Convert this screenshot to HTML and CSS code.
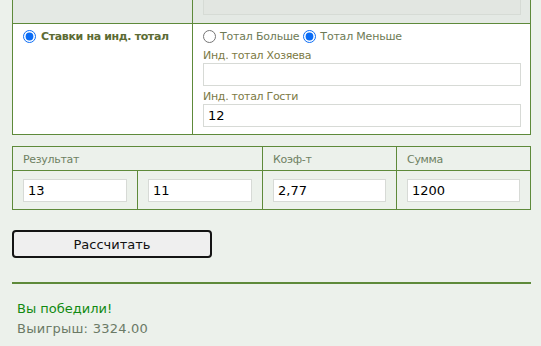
FILE: index.html
```html
<!DOCTYPE html>
<html>
<head>
<meta charset="utf-8">
<link rel="stylesheet" href="styles.css">
</head>
<body>
<div class="page">
  <div class="bets">
    <div class="cell top-left"></div>
    <div class="cell top-right"><div class="disabled-box"></div></div>
    <div class="cell main-left">
      <label class="bet-type"><input type="radio" name="type" checked> Ставки на инд. тотал</label>
    </div>
    <div class="cell main-right">
      <div class="radios">
        <label><input type="radio" name="ou"> Тотал Больше</label>
        <label><input type="radio" name="ou" checked> Тотал Меньше</label>
      </div>
      <div class="field-label">Инд. тотал Хозяева</div>
      <input class="text" type="text" value="">
      <div class="field-label">Инд. тотал Гости</div>
      <input class="text" type="text" value="12">
    </div>
  </div>

  <div class="results">
    <div class="head span2">Результат</div>
    <div class="head">Коэф-т</div>
    <div class="head last">Сумма</div>
    <div class="body"><input class="text" type="text" value="13"></div>
    <div class="body"><input class="text" type="text" value="11"></div>
    <div class="body"><input class="text" type="text" value="2,77"></div>
    <div class="body last"><input class="text" type="text" value="1200"></div>
  </div>

  <button class="calc" type="button">Рассчитать</button>

  <hr class="sep">

  <div class="win">Вы победили!</div>
  <div class="payout">Выигрыш: 3324.00</div>
</div>
</body>
</html>
```
FILE: styles.css
```css
html, body {
  margin: 0;
  padding: 0;
  background: #ecf1eb;
  font-family: "DejaVu Sans", Verdana, sans-serif;
}
.page {
  padding-left: 12px;
  width: 519px;
}
.bets {
  display: grid;
  grid-template-columns: 180px 1fr;
  grid-template-rows: 24px 110px;
  border: 1px solid #5e8a3a;
  border-top: none;
}
.cell {
  box-sizing: border-box;
}
.top-left, .top-right {
  background: #e4e9e4;
  border-bottom: 1px solid #5e8a3a;
}
.top-left, .main-left {
  border-right: 1px solid #5e8a3a;
}
.top-right {
  padding: 0 9px 0 10px;
}
.disabled-box {
  height: 15px;
  background: #e2e6e1;
  border: 1px solid #d6dbd5;
  border-top: none;
  box-sizing: border-box;
}
.main-left, .main-right {
  background: #fff;
}
.main-left {
  padding: 6px 0 0 10px;
}
.bet-type {
  display: flex;
  align-items: center;
  height: 13px;
  gap: 5px;
  font-weight: bold;
  font-size: 11px;
  letter-spacing: -0.35px;
  color: #5c6b34;
}
input[type=radio] {
  margin: 0;
  width: 13px;
  height: 13px;
  flex: none;
  accent-color: #0a6cf5;
}
.main-right {
  padding: 6px 9px 0 10px;
}
.radios {
  display: flex;
  align-items: flex-start;
  height: 15px;
  gap: 4px;
  font-size: 11px;
  letter-spacing: -0.2px;
  color: #6d7a55;
}
.radios label {
  display: flex;
  align-items: center;
  height: 13px;
  gap: 4px;
}
.field-label {
  font-size: 11px;
  letter-spacing: -0.3px;
  color: #7c7a45;
  margin-top: 4px;
  height: 14px;
  line-height: 14px;
}
.text {
  display: block;
  box-sizing: border-box;
  width: 100%;
  height: 23px;
  border: 1px solid #d7dad6;
  background: #fff;
  font-family: "DejaVu Sans", Verdana, sans-serif;
  font-size: 13px;
  color: #000;
  padding: 0 4px 0 4px;
  margin: 0;
  outline: none;
}
.results {
  margin-top: 11px;
  display: grid;
  grid-template-columns: 125px 125px 134px 1fr;
  grid-template-rows: 24px 39px;
  border: 1px solid #5e8a3a;
  border-bottom: none;
}
.head, .body {
  box-sizing: border-box;
  border-bottom: 1px solid #5e8a3a;
  border-right: 1px solid #5e8a3a;
}
.last {
  border-right: none;
}
.span2 {
  grid-column: span 2;
}
.head {
  font-size: 11px;
  letter-spacing: -0.3px;
  color: #6e8062;
  padding: 6px 0 0 10px;
}
.body {
  padding: 8px 10px 0 10px;
}
.calc {
  display: block;
  margin-top: 20px;
  width: 200px;
  height: 28px;
  border: 2px solid #141414;
  border-radius: 4px;
  background: #efefef;
  font-family: "DejaVu Sans", Verdana, sans-serif;
  font-size: 13px;
  color: #111;
  padding: 0;
}
.sep {
  margin: 24px 0 0 0;
  border: none;
  height: 2px;
  background: #5e8a3a;
}
.win {
  margin-top: 15px;
  font-size: 13px;
  color: #118a11;
  padding-left: 5px;
  line-height: 20px;
}
.payout {
  font-size: 13px;
  letter-spacing: 0.25px;
  color: #6b7a66;
  padding-left: 5px;
  line-height: 20px;
}
```
